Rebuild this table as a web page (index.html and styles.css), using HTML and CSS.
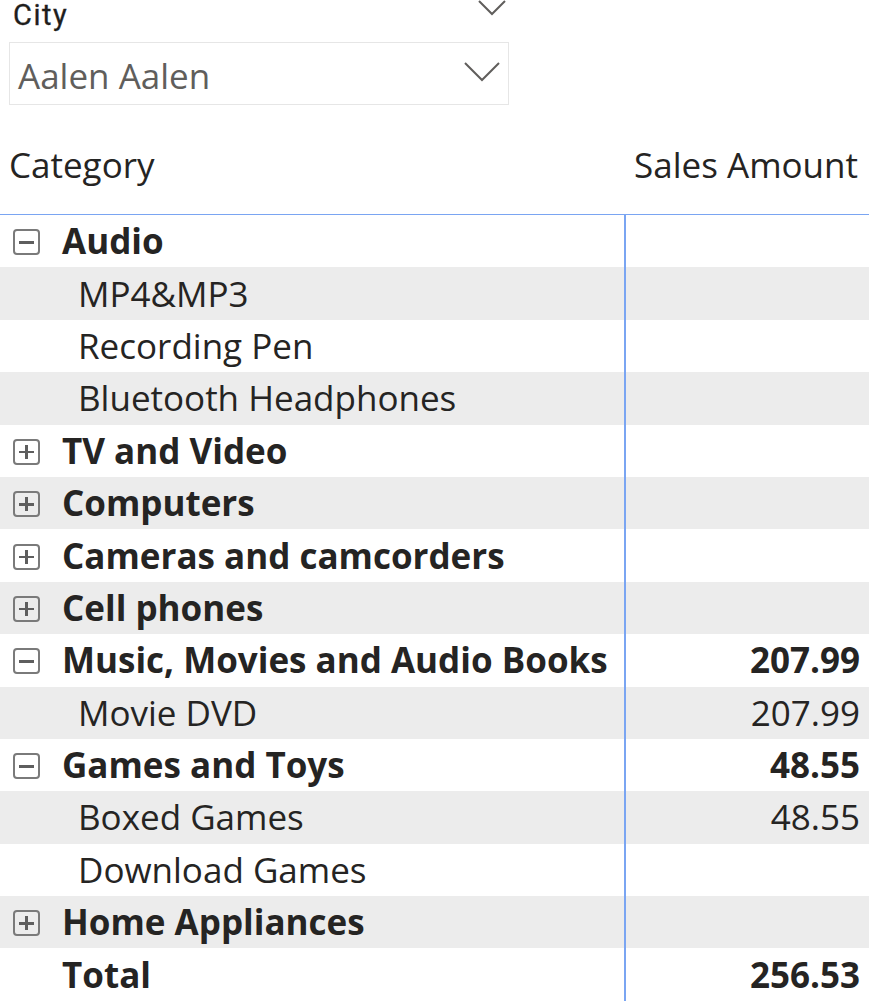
FILE: index.html
```html
<!DOCTYPE html>
<html>
<head>
<meta charset="utf-8">
<link rel="stylesheet" href="styles.css">
</head>
<body>
<div class="slicer">
  <div class="slicer-head">
    <span class="slicer-title">City</span>
    <svg class="chev chev-small" viewBox="0 0 28 16"><path d="M1 1 L14 14 L27 1" /></svg>
  </div>
  <div class="slicer-box">
    <span class="slicer-value">Aalen Aalen</span>
    <svg class="chev chev-big" viewBox="0 0 36 20"><path d="M1 1 L18 18 L35 1" /></svg>
  </div>
</div>

<div class="matrix">
  <div class="mhead">
    <div class="hcell">Category</div>
    <div class="hcell right">Sales Amount</div>
  </div>
  <div class="mbody">
    <div class="row lvl0"><div class="c1"><span class="ico minus"></span><span class="lbl">Audio</span></div><div class="c2"></div></div>
    <div class="row lvl1 alt"><div class="c1"><span class="lbl">MP4&amp;MP3</span></div><div class="c2"></div></div>
    <div class="row lvl1"><div class="c1"><span class="lbl">Recording Pen</span></div><div class="c2"></div></div>
    <div class="row lvl1 alt"><div class="c1"><span class="lbl">Bluetooth Headphones</span></div><div class="c2"></div></div>
    <div class="row lvl0"><div class="c1"><span class="ico plus"></span><span class="lbl">TV and Video</span></div><div class="c2"></div></div>
    <div class="row lvl0 alt"><div class="c1"><span class="ico plus"></span><span class="lbl">Computers</span></div><div class="c2"></div></div>
    <div class="row lvl0"><div class="c1"><span class="ico plus"></span><span class="lbl">Cameras and camcorders</span></div><div class="c2"></div></div>
    <div class="row lvl0 alt"><div class="c1"><span class="ico plus"></span><span class="lbl">Cell phones</span></div><div class="c2"></div></div>
    <div class="row lvl0"><div class="c1"><span class="ico minus"></span><span class="lbl">Music, Movies and Audio Books</span></div><div class="c2">207.99</div></div>
    <div class="row lvl1 alt"><div class="c1"><span class="lbl">Movie DVD</span></div><div class="c2">207.99</div></div>
    <div class="row lvl0"><div class="c1"><span class="ico minus"></span><span class="lbl">Games and Toys</span></div><div class="c2">48.55</div></div>
    <div class="row lvl1 alt"><div class="c1"><span class="lbl">Boxed Games</span></div><div class="c2">48.55</div></div>
    <div class="row lvl1"><div class="c1"><span class="lbl">Download Games</span></div><div class="c2"></div></div>
    <div class="row lvl0 alt"><div class="c1"><span class="ico plus"></span><span class="lbl">Home Appliances</span></div><div class="c2"></div></div>
    <div class="row total"><div class="c1"><span class="lbl">Total</span></div><div class="c2">256.53</div></div>
  </div>
</div>
</body>
</html>
```
FILE: styles.css
```css
html, body {
  margin: 0;
  padding: 0;
  background: #ffffff;
}
body {
  width: 869px;
  height: 1002px;
  overflow: hidden;
  font-family: "Open Sans", "Noto Sans", "Liberation Sans", sans-serif;
  color: #252423;
}
.slicer {
  padding: 0 0 0 9px;
  width: 500px;
}
.slicer-head {
  height: 42px;
  display: flex;
  justify-content: space-between;
  align-items: flex-start;
}
.slicer-title {
  font-family: Roboto, "Liberation Sans", sans-serif;
  font-size: 29px;
  line-height: 31px;
  letter-spacing: 1.5px;
  padding-left: 4px;
  color: #1f1e1d;
  -webkit-text-stroke: 0.3px #1f1e1d;
}
.chev {
  fill: none;
  stroke: #605e5c;
  stroke-width: 2;
}
.chev-small {
  width: 28px;
  height: 16px;
  margin-right: 3px;
}
.slicer-box {
  height: 61px;
  border: 1px solid #e6e6e6;
  display: flex;
  align-items: center;
  justify-content: space-between;
  padding: 0 8px 0 8px;
}
.slicer-value {
  font-size: 35px;
  line-height: 48px;
  margin-top: 4px;
  color: #605e5c;
}
.chev-big {
  width: 36px;
  height: 20px;
  margin-top: -4px;
}
.mhead {
  display: flex;
  justify-content: space-between;
  height: 110px;
  border-bottom: 1px solid #7aa5f2;
  box-sizing: border-box;
}
.hcell {
  font-size: 35px;
  line-height: 48px;
  padding: 36px 9px 0 9px;
  white-space: nowrap;
  color: #252423;
}
.hcell.right {
  padding-right: 11px;
}
.mbody {
  display: flex;
  flex-direction: column;
}
.row {
  display: grid;
  grid-template-columns: 626px 243px;
  height: 52.4px;
  font-size: 35px;
  line-height: 48px;
}
.row.alt {
  background: #ececec;
}
.c1 {
  display: flex;
  align-items: center;
  border-right: 2px solid #7aa5f2;
  box-sizing: border-box;
  white-space: nowrap;
}
.c2 {
  display: flex;
  align-items: center;
  justify-content: flex-end;
  padding-right: 9px;
}
.lvl0 .c1, .total .c1,
.lvl0 .c2, .total .c2 {
  font-weight: 700;
}
.lvl0 .c1 {
  padding-left: 13px;
}
.lvl1 .c1 {
  padding-left: 78px;
}
.total .c1 {
  padding-left: 62px;
}
.ico {
  width: 23px;
  height: 22px;
  border: 2.5px solid #7a7a7a;
  border-radius: 4px;
  margin-right: 22px;
  margin-top: 2px;
  position: relative;
  flex: none;
}
.ico::before {
  content: "";
  position: absolute;
  left: 4px;
  right: 4px;
  top: 10px;
  height: 2.5px;
  background: #5e5e5e;
}
.plus::after {
  content: "";
  position: absolute;
  top: 4px;
  bottom: 4px;
  left: 10.25px;
  width: 2.5px;
  background: #5e5e5e;
}
```
